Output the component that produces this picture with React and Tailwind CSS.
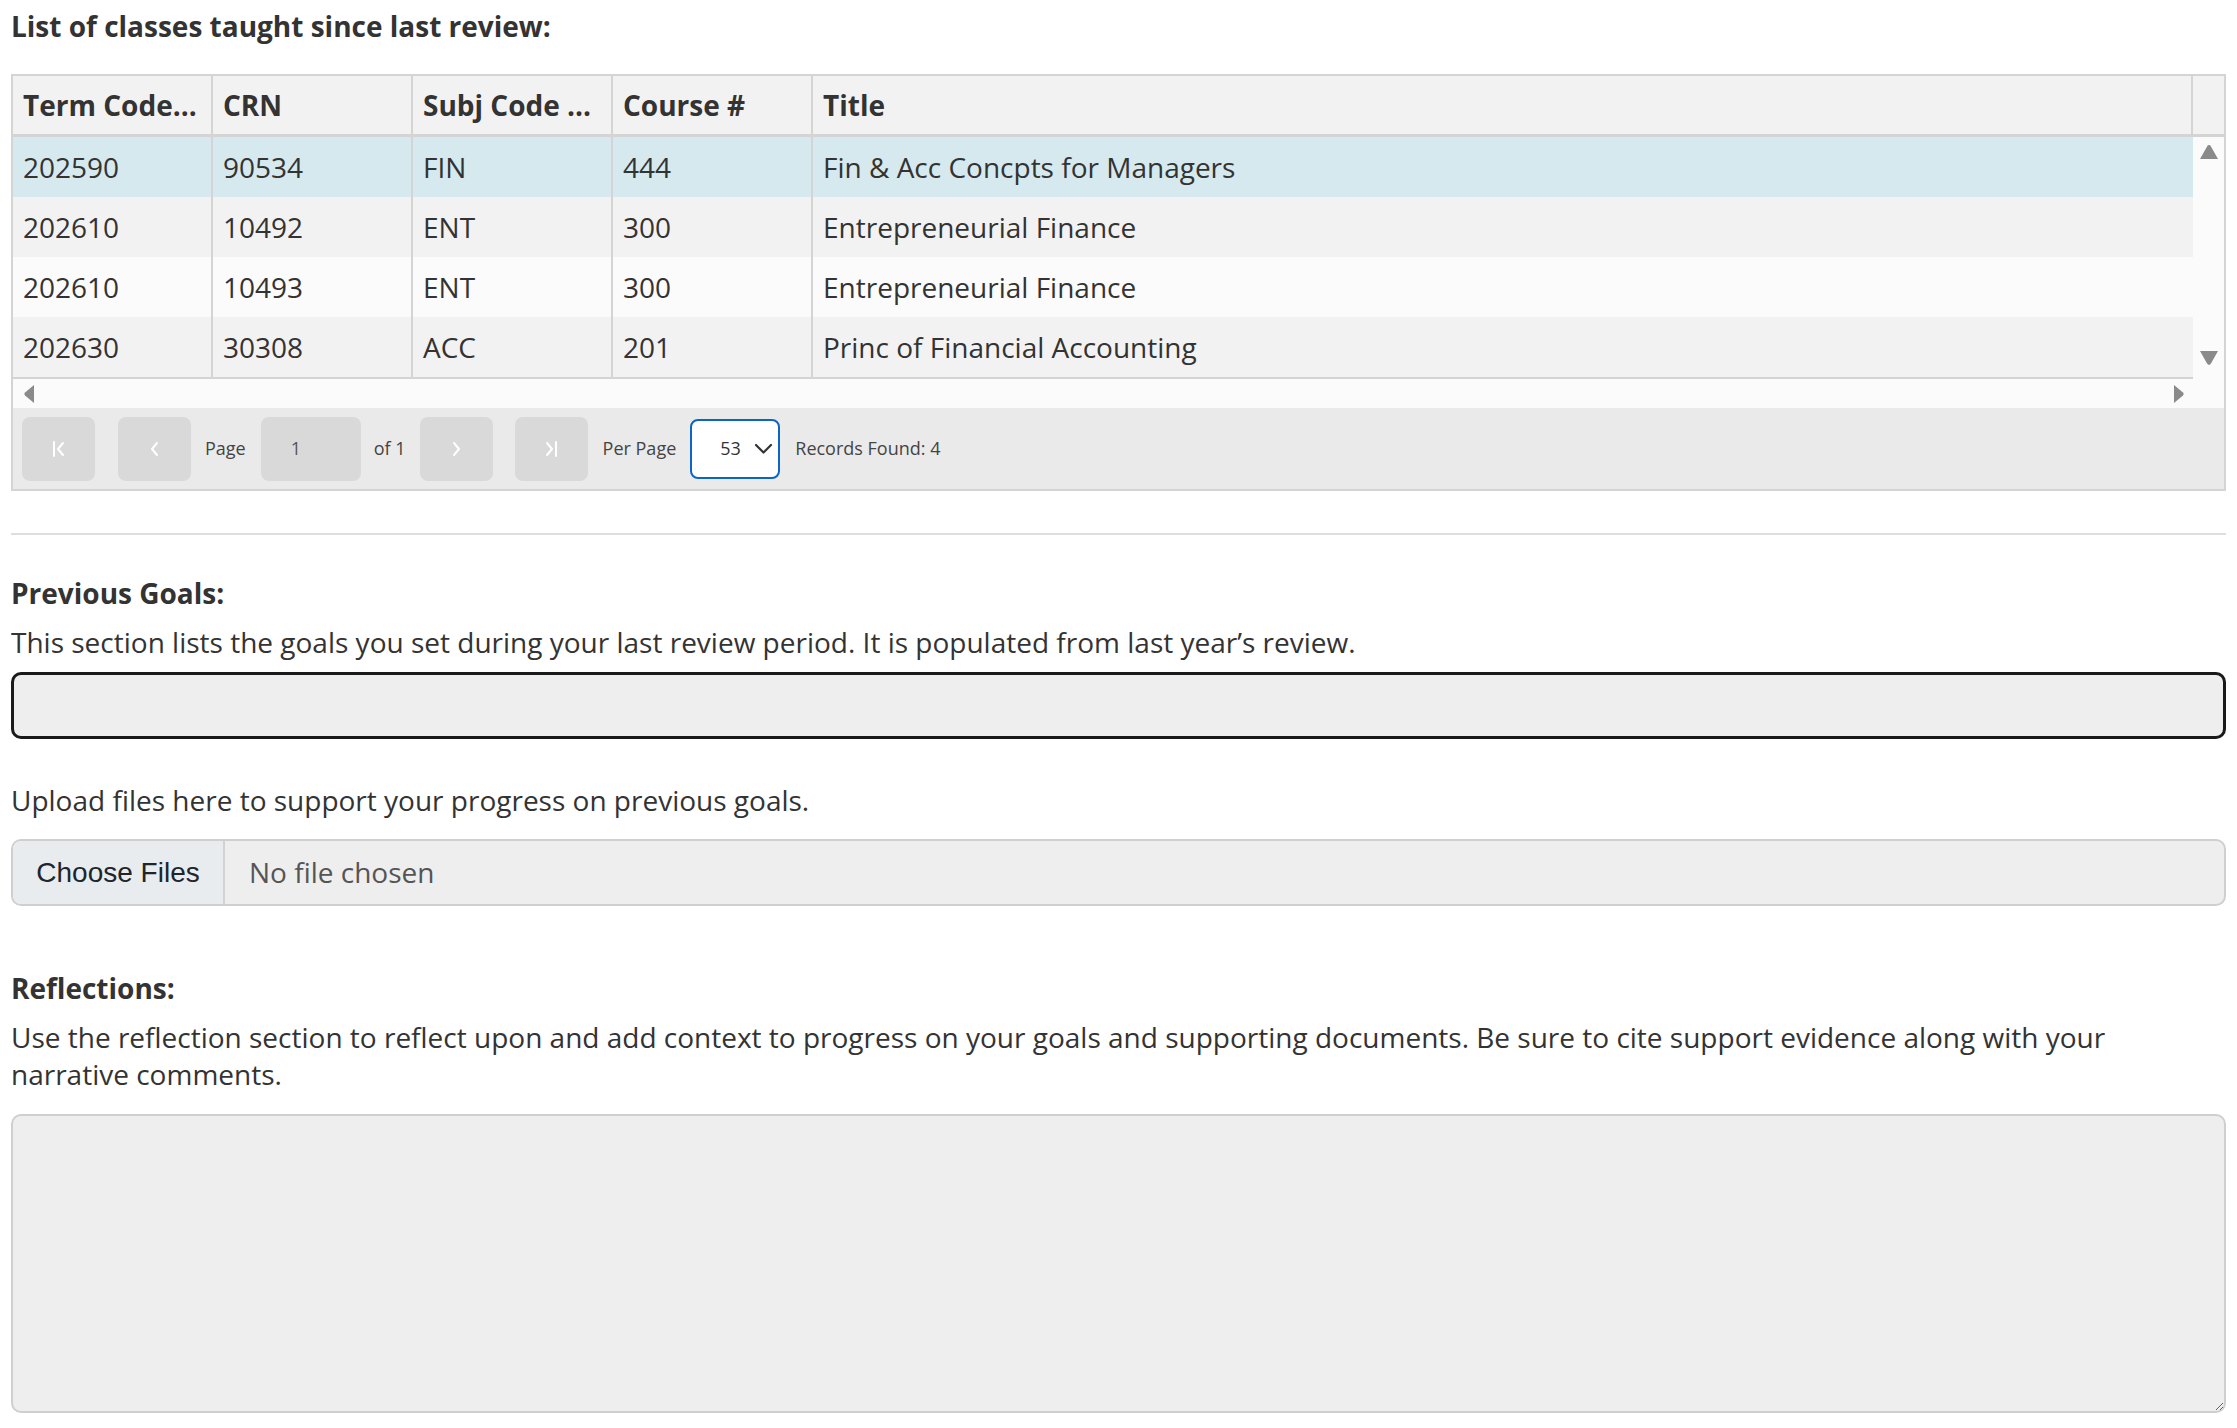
import React from 'react';

const rows = [
  { term: '202590', crn: '90534', subj: 'FIN', course: '444', title: 'Fin & Acc Concpts for Managers' },
  { term: '202610', crn: '10492', subj: 'ENT', course: '300', title: 'Entrepreneurial Finance' },
  { term: '202610', crn: '10493', subj: 'ENT', course: '300', title: 'Entrepreneurial Finance' },
  { term: '202630', crn: '30308', subj: 'ACC', course: '201', title: 'Princ of Financial Accounting' },
];

const rowBg = ['bg-[#d5e9ef]', 'bg-[#f2f2f2]', 'bg-[#fbfbfb]', 'bg-[#f2f2f2]'];

const PagerIcon = ({ kind }) => (
  <svg width="16" height="20" viewBox="0 0 16 20" fill="none" stroke="#ffffff" strokeWidth="2" strokeLinecap="round" strokeLinejoin="round">
    {kind === 'first' && (<><path d="M3 3v14" /><path d="M12 4l-5 6 5 6" /></>)}
    {kind === 'prev' && <path d="M10 4l-5 6 5 6" />}
    {kind === 'next' && <path d="M6 4l5 6-5 6" />}
    {kind === 'last' && (<><path d="M4 4l5 6-5 6" /><path d="M13 3v14" /></>)}
  </svg>
);

const PagerButton = ({ kind, className = '' }) => (
  <button className={`w-[73px] h-[64px] rounded-[8px] bg-[#d9d9d9] flex items-center justify-center shrink-0 ${className}`}>
    <PagerIcon kind={kind} />
  </button>
);

const Cell = ({ children, header, last }) => (
  <div
    className={`${last ? 'flex-1' : 'w-[200px]'} ${last && !header ? '' : 'border-r-2 border-[#d4d4d4]'} pl-[10px] pr-2 flex items-center overflow-hidden whitespace-nowrap ${header ? 'font-bold' : ''}`}
  >
    {children}
  </div>
);

export default function App() {
  return (
    <div className="px-[11px] pt-[8px] pb-4 text-[28px] leading-[37px] text-[#333333] bg-white" style={{ fontFamily: '"Open Sans", "Noto Sans", sans-serif' }}>
      <h2 className="font-bold">List of classes taught since last review:</h2>

      <div className="mt-[29px] border-2 border-[#d4d4d4]">
        {/* header */}
        <div className="flex h-[61px] bg-[#f2f2f2] border-b-[3px] border-[#d4d4d4]">
          <Cell header>Term Code...</Cell>
          <Cell header>CRN</Cell>
          <Cell header>Subj Code ...</Cell>
          <Cell header>Course #</Cell>
          <Cell header last>Title</Cell>
          <div className="w-[31px]" />
        </div>

        {/* body */}
        <div className="flex">
          <div className="flex-1 flex flex-col">
            {rows.map((r, i) => (
              <div key={i} className={`flex h-[60px] ${rowBg[i]}`}>
                <Cell>{r.term}</Cell>
                <Cell>{r.crn}</Cell>
                <Cell>{r.subj}</Cell>
                <Cell>{r.course}</Cell>
                <Cell last>{r.title}</Cell>
              </div>
            ))}
            <div className="h-[31px] bg-[#fbfbfb] border-t-2 border-[#d4d4d4] flex items-center justify-between pl-[10px] pr-[8px]">
              <svg width="12" height="20" viewBox="0 0 12 20"><path d="M11 1 L2 8.5 Q0.5 10 2 11.5 L11 19 Z" fill="#8a8a8a" /></svg>
              <svg width="12" height="20" viewBox="0 0 12 20"><path d="M1 1 L10 8.5 Q11.5 10 10 11.5 L1 19 Z" fill="#8a8a8a" /></svg>
            </div>
          </div>
          <div className="w-[31px] bg-[#fbfbfb] flex flex-col items-center pt-[7px]">
            <svg width="20" height="16" viewBox="0 0 20 16"><path d="M10 1 Q8.8 1 8.2 2.2 L1 15 L19 15 L11.8 2.2 Q11.2 1 10 1 Z" fill="#8a8a8a" /></svg>
            <div className="h-[190px]" />
            <svg width="20" height="16" viewBox="0 0 20 16"><path d="M1 1 L19 1 L11.8 13.8 Q10 16 8.2 13.8 Z" fill="#8a8a8a" /></svg>
          </div>
        </div>

        {/* pager */}
        <div className="h-[81px] bg-[#eaeaea] flex items-center pl-[9px] text-[18px] text-[#444444]">
          <PagerButton kind="first" />
          <PagerButton kind="prev" className="ml-[23px]" />
          <span className="ml-[14px]">Page</span>
          <div className="ml-[15px] w-[100px] h-[64px] rounded-[8px] bg-[#d9d9d9] flex items-center pl-[30px] text-[#555555]">1</div>
          <span className="ml-[13px]">of 1</span>
          <PagerButton kind="next" className="ml-[14px]" />
          <PagerButton kind="last" className="ml-[22px]" />
          <span className="ml-[15px]">Per Page</span>
          <div className="ml-[14px] w-[90px] h-[60px] rounded-[8px] bg-white border-2 border-[#0a66c2] flex items-center pl-[28px] gap-[13px] text-[#333333]">
            <span>53</span>
            <svg width="19" height="11" viewBox="0 0 19 11" fill="none" stroke="#333333" strokeWidth="2.2" strokeLinecap="round" strokeLinejoin="round"><path d="M2 2l7.5 7.5L17 2" /></svg>
          </div>
          <span className="ml-[15px]">Records Found: 4</span>
        </div>
      </div>

      <hr className="mt-[42px] border-0 border-t-2 border-[#dedede]" />

      <h3 className="mt-[40px] font-bold">Previous Goals:</h3>
      <p className="mt-[12px]">This section lists the goals you set during your last review period. It is populated from last year’s review.</p>
      <div className="mt-[11px] h-[67px] rounded-[10px] border-[3px] border-[#1a1a1a] bg-[#eeeeee]" />

      <p className="mt-[43px]">Upload files here to support your progress on previous goals.</p>
      <div className="mt-[20px] h-[67px] rounded-[10px] border-2 border-[#cfcfcf] bg-[#eeeeee] flex items-stretch overflow-hidden">
        <div className="w-[212px] bg-[#e9ecef] border-r-2 border-[#d2d2d2] flex items-center justify-center text-[#212529]" style={{ fontFamily: '"Liberation Sans", Arial, sans-serif' }}>
          Choose Files
        </div>
        <div className="flex items-center pl-[24px] text-[#555555]">No file chosen</div>
      </div>

      <h3 className="mt-[64px] font-bold">Reflections:</h3>
      <p className="mt-[12px]">Use the reflection section to reflect upon and add context to progress on your goals and supporting documents. Be sure to cite support evidence along with your narrative comments.</p>
      <textarea readOnly className="mt-[21px] block w-full h-[299px] rounded-[10px] border-2 border-[#cfcfcf] bg-[#eeeeee] outline-none" />
    </div>
  );
}
